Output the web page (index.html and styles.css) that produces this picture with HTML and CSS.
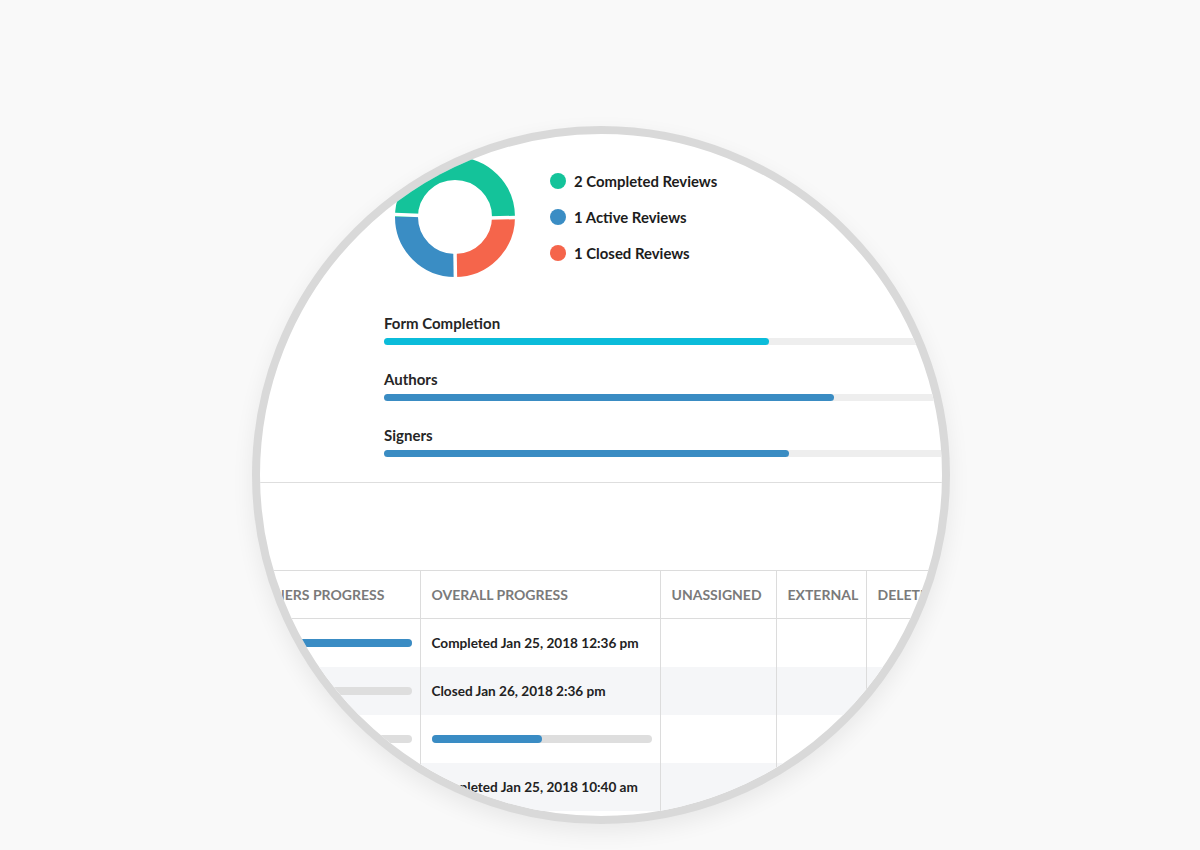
FILE: index.html
```html
<!DOCTYPE html>
<html lang="en">
<head>
<meta charset="utf-8">
<title>Review summary</title>
<link rel="stylesheet" href="styles.css">
</head>
<body>
<div class="stage">
  <div class="lens">
    <div class="view">
      <section class="summary">
        <svg class="donut" width="120" height="120" viewBox="0 0 120 120">
          <path d="M11.5 60 A48.5 48.5 0 0 1 108.5 60" fill="none" stroke="#14c39a" stroke-width="23"/>
          <path d="M108.5 60 A48.5 48.5 0 0 1 60 108.5" fill="none" stroke="#f5654b" stroke-width="23"/>
          <path d="M60 108.5 A48.5 48.5 0 0 1 11.5 60" fill="none" stroke="#3a8dc4" stroke-width="23"/>
          <line x1="0" y1="57.5" x2="26" y2="58.5" stroke="#fff" stroke-width="3.5"/>
          <line x1="94" y1="61" x2="120" y2="60.5" stroke="#fff" stroke-width="3.5"/>
          <line x1="60" y1="94" x2="60.4" y2="120" stroke="#fff" stroke-width="3.5"/>
        </svg>
        <ul class="legend">
          <li class="legend-item"><span class="dot dot-green"></span>2 Completed Reviews</li>
          <li class="legend-item"><span class="dot dot-blue"></span>1 Active Reviews</li>
          <li class="legend-item"><span class="dot dot-red"></span>1 Closed Reviews</li>
        </ul>
      </section>

      <section class="progress">
        <div class="metric">
          <div class="metric-label">Form Completion</div>
          <div class="track"><div class="fill fill-cyan" style="width:64.2%"></div></div>
        </div>
        <div class="metric">
          <div class="metric-label">Authors</div>
          <div class="track"><div class="fill fill-blue" style="width:75%"></div></div>
        </div>
        <div class="metric">
          <div class="metric-label">Signers</div>
          <div class="track"><div class="fill fill-blue" style="width:67.5%"></div></div>
        </div>
      </section>

      <div class="divider"></div>

      <table class="grid">
        <colgroup>
          <col class="c-signers">
          <col class="c-overall">
          <col class="c-unassigned">
          <col class="c-external">
          <col class="c-deleted">
        </colgroup>
        <thead>
          <tr>
            <th>Signers Progress</th>
            <th>Overall Progress</th>
            <th>Unassigned</th>
            <th>External</th>
            <th>Deleted</th>
          </tr>
        </thead>
        <tbody>
          <tr>
            <td><div class="bar"><div class="bar-fill" style="width:100%"></div></div></td>
            <td>Completed Jan 25, 2018 12:36 pm</td>
            <td></td>
            <td></td>
            <td class="num">-</td>
          </tr>
          <tr class="alt">
            <td><div class="bar"><div class="bar-fill" style="width:0%"></div></div></td>
            <td>Closed Jan 26, 2018 2:36 pm</td>
            <td></td>
            <td></td>
            <td></td>
          </tr>
          <tr>
            <td><div class="bar"><div class="bar-fill" style="width:0%"></div></div></td>
            <td><div class="bar"><div class="bar-fill" style="width:50%"></div></div></td>
            <td></td>
            <td></td>
            <td></td>
          </tr>
          <tr class="alt">
            <td></td>
            <td>Completed Jan 25, 2018 10:40 am</td>
            <td></td>
            <td></td>
            <td></td>
          </tr>
        </tbody>
      </table>
    </div>
  </div>
</div>
</body>
</html>
```

FILE: styles.css
```css
html, body {
  margin: 0;
  padding: 0;
}

body {
  background: #f9f9f9;
  font-family: "Source Sans Pro", Lato, "Open Sans", sans-serif;
  color: #222;
}

.stage {
  width: 1200px;
  height: 850px;
  box-sizing: border-box;
  padding: 126px 0 0 252px;
  overflow: hidden;
}

.lens {
  width: 682px;
  height: 682px;
  border: 8px solid #d9d9d9;
  border-radius: 50%;
  background: #fff;
  overflow: hidden;
  box-shadow: 0 8px 22px rgba(0, 0, 0, 0.07);
}

.view {
  width: 682px;
}

/* summary */
.summary {
  display: flex;
  align-items: center;
  padding: 23px 0 0 135px;
  height: 120px;
}

.donut {
  display: block;
  flex: none;
}

.legend {
  list-style: none;
  margin: 0 0 0 35px;
  padding: 0;
}

.legend-item {
  display: flex;
  align-items: center;
  gap: 8px;
  height: 36px;
  font-size: 14.9px;
  font-weight: 700;
  color: #1c1c1c;
}

.dot {
  width: 16px;
  height: 16px;
  border-radius: 50%;
  flex: none;
}

.dot-green { background: #14c39a; }
.dot-blue { background: #3a8dc4; }
.dot-red { background: #f5654b; }

/* progress */
.progress {
  margin: 36px 0 0 124px;
  display: flex;
  flex-direction: column;
  gap: 24px;
}

.metric-label {
  font-size: 15px;
  font-weight: 700;
  line-height: 20px;
  color: #262626;
  margin-bottom: 5px;
}

.track {
  width: 600px;
  height: 7px;
  border-radius: 4px;
  background: #eeeeee;
}

.fill {
  height: 100%;
  border-radius: 4px;
}

.fill-cyan { background: #0bbcda; }
.fill-blue { background: #3a8cc3; }

.divider {
  margin-top: 25px;
  height: 1px;
  background: #dedede;
}

/* table */
.grid {
  margin: 87px 0 0 -19px;
  border-collapse: collapse;
  table-layout: fixed;
  width: 745px;
}

.c-signers { width: 179px; }
.c-overall { width: 240px; }
.c-unassigned { width: 116px; }
.c-external { width: 90px; }
.c-deleted { width: 120px; }

.grid th {
  height: 47px;
  padding: 0 11px;
  text-align: left;
  font-size: 14px;
  font-weight: 700;
  text-transform: uppercase;
  color: #7a7a7a;
  white-space: nowrap;
  border-top: 1px solid #dcdcdc;
  border-bottom: 1px solid #dcdcdc;
  border-left: 1px solid #dcdcdc;
}

.grid th:first-child,
.grid td:first-child {
  border-left: none;
}

.grid td {
  height: 48px;
  padding: 0 8px 0 11px;
  font-size: 13.6px;
  font-weight: 700;
  color: #222;
  white-space: nowrap;
  border-left: 1px solid #dcdcdc;
}

.grid tr.alt td {
  background: #f5f6f8;
}

.grid td.num {
  padding-left: 31px;
  color: #999;
}

.bar {
  height: 8px;
  border-radius: 4px;
  background: #dedede;
}

.bar-fill {
  height: 100%;
  border-radius: 4px;
  background: #3a8cc4;
}
```
